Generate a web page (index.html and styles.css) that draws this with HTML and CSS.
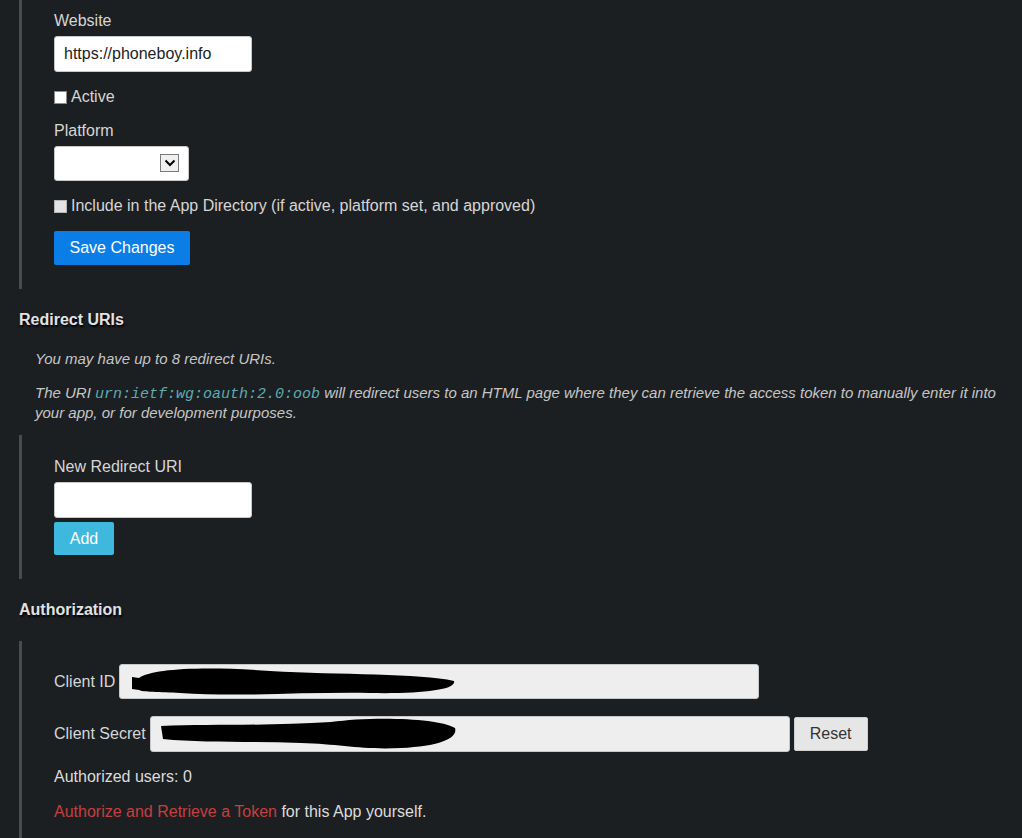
FILE: index.html
```html
<!DOCTYPE html>
<html lang="en">
<head>
  <meta charset="UTF-8">
  <title>App Settings</title>
  <link rel="stylesheet" href="styles.css">
</head>
<body>
<div class="wrap">

  <!-- App details -->
  <div class="panel panel-app">
    <label class="label" for="website">Website</label>
    <input class="text-input" id="website" type="text" value="https://phoneboy.info">

    <label class="check">
      <input type="checkbox"> Active
    </label>

    <label class="label label-gap" for="platform">Platform</label>
    <span class="select-wrap">
      <select id="platform" class="select"></select>
      <span class="select-arrow">
        <svg width="12" height="8" viewBox="0 0 12 8"><path d="M1.5 1.5 L6 6 L10.5 1.5" fill="none" stroke="#000" stroke-width="2"/></svg>
      </span>
    </span>

    <label class="check check-disabled">
      <input type="checkbox" disabled> Include in the App Directory (if active, platform set, and approved)
    </label>

    <button class="btn btn-primary">Save Changes</button>
  </div>

  <!-- Redirect URIs -->
  <h3 class="section-title">Redirect URIs</h3>
  <div class="notes">
    <p>You may have up to 8 redirect URIs.</p>
    <p>The URI <code>urn:ietf:wg:oauth:2.0:oob</code> will redirect users to an HTML page where they can retrieve the access token to manually enter it into your app, or for development purposes.</p>
  </div>

  <div class="panel panel-redirect">
    <label class="label" for="redirect">New Redirect URI</label>
    <input class="text-input" id="redirect" type="text">
    <button class="btn btn-info">Add</button>
  </div>

  <!-- Authorization -->
  <h3 class="section-title section-title-auth">Authorization</h3>
  <div class="panel panel-auth">
    <div class="field-row">
      <span class="field-label">Client ID</span>
      <div class="static-field static-field-id">
        <svg class="redact" width="340" height="34" viewBox="0 0 340 34">
          <path d="M12 12 L19 13 C32 4 80 1 150 6 C220 10 300 8 334 16 C337 25 300 29 250 28 C180 27 120 32 60 28 C40 27 22 27 19 25 L12 24 Z" fill="#000"/>
        </svg>
      </div>
    </div>
    <div class="field-row field-row-secret">
      <span class="field-label">Client Secret</span>
      <div class="static-field">
        <svg class="redact" width="310" height="36" viewBox="0 0 310 36">
          <path d="M10 10 C60 8 120 10 180 6 C220 0 290 2 304 12 C307 22 290 30 250 32 C210 34 190 28 150 27 C100 25 50 27 12 23 Z" fill="#000"/>
        </svg>
      </div>
      <button class="btn btn-default">Reset</button>
    </div>
    <p class="auth-line">Authorized users: 0</p>
    <p class="auth-line auth-link-line"><a href="#" class="link">Authorize and Retrieve a Token</a> for this App yourself.</p>
  </div>

</div>
</body>
</html>
```

FILE: styles.css
```css
/* General Reset */
* {
  margin: 0;
  padding: 0;
  box-sizing: border-box;
}

body {
  font-family: 'Liberation Sans', Arial, sans-serif;
  font-size: 16px;
  line-height: 18px;
  background: #1c1f21;
  color: #d6d6d6;
  overflow: hidden;
}

.wrap {
  padding-left: 19px;
}

/* Panels with the grey bar on the left */
.panel {
  border-left: 3px solid #4b4b4b;
  padding: 0 32px;
}

.panel-app {
  padding-top: 12px;
  padding-bottom: 24px;
}

.panel-redirect {
  margin-top: 13px;
  padding-top: 23px;
  padding-bottom: 24px;
}

.panel-auth {
  margin-top: 22px;
  padding-top: 23px;
  padding-bottom: 30px;
}

.label {
  display: block;
  margin-bottom: 6px;
}

.label-gap {
  margin-top: 16px;
}

.text-input {
  display: block;
  width: 198px;
  height: 36px;
  border: 1px solid #c8c8c8;
  border-radius: 3px;
  background: #fff;
  padding: 0 9px;
  font-family: inherit;
  font-size: 16px;
  color: #222;
}

/* Checkbox rows */
.check {
  display: flex;
  align-items: center;
  margin-top: 16px;
  height: 18px;
}

.check input {
  appearance: none;
  width: 13px;
  height: 13px;
  border: 1px solid #8a8a8a;
  background: #fff;
  margin-right: 4px;
}

.check-disabled {
  margin-top: 16px;
}

.check-disabled input {
  background: #e3e3e3;
  border-color: #b5b5b5;
}

/* Select box */
.select-wrap {
  position: relative;
  display: block;
  width: 135px;
  height: 35px;
}

.select {
  appearance: none;
  width: 135px;
  height: 35px;
  border: 1px solid #c8c8c8;
  border-radius: 3px;
  background: #fff;
}

.select-arrow {
  position: absolute;
  top: 8px;
  left: 106px;
  width: 19px;
  height: 18px;
  border: 1px solid #7a7a7a;
  background: #f0f0f0;
  display: flex;
  align-items: center;
  justify-content: center;
  pointer-events: none;
}

/* Buttons */
.btn {
  font-family: inherit;
  font-size: 16px;
  border: none;
  border-radius: 2px;
  cursor: pointer;
}

.btn-primary {
  display: block;
  margin-top: 16px;
  width: 136px;
  height: 34px;
  background: #0a7ee6;
  color: #fff;
}

.btn-info {
  display: block;
  margin-top: 4px;
  width: 60px;
  height: 33px;
  background: #3fb8de;
  color: #fff;
}

.btn-default {
  width: 74px;
  height: 34px;
  margin-left: 4px;
  background: #e6e6e6;
  border: 1px solid #cfcfcf;
  color: #333;
}

/* Section headings */
.section-title {
  margin-top: 22px;
  font-size: 16px;
  line-height: 18px;
  font-weight: bold;
  color: #e2e2e2;
  text-shadow: 1px 2px 2px #000;
}

.notes {
  margin-top: 21px;
  padding-left: 16px;
  font-size: 15px;
  line-height: 18px;
  font-style: italic;
  color: #c6c6c6;
}

.notes p + p {
  margin-top: 16px;
}

.notes code {
  font-family: 'Liberation Mono', 'Courier New', monospace;
  font-size: 15px;
  font-style: italic;
  color: #5eaab2;
}

/* Client credentials */
.field-row {
  display: flex;
  align-items: center;
}

.field-row-secret {
  margin-top: 17px;
}

.field-label {
  margin-right: 4px;
}

.static-field {
  width: 640px;
  height: 36px;
  border: 1px solid #c8c8c8;
  border-radius: 3px;
  background: #eee;
  display: flex;
  align-items: center;
}

.static-field-id {
  height: 35px;
}

.redact {
  display: block;
}

.auth-line {
  margin-top: 16px;
  color: #dcdcdc;
}

.auth-link-line {
  margin-top: 17px;
}

.link {
  color: #c4403f;
  text-decoration: none;
}
```
